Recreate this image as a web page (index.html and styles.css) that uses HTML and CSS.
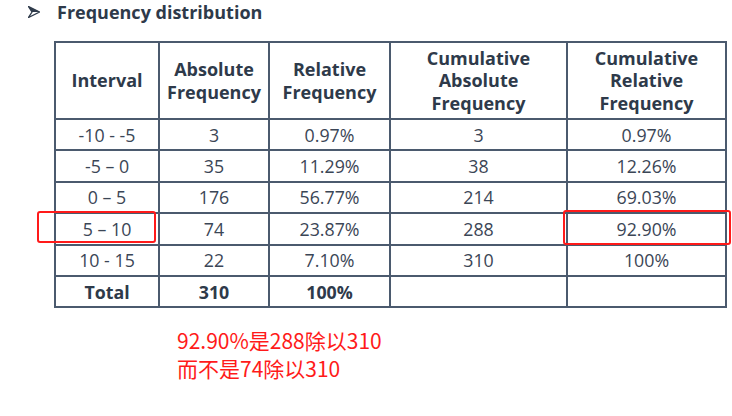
FILE: index.html
```html
<!DOCTYPE html>
<html>
<head>
<meta charset="utf-8">
<link rel="stylesheet" href="styles.css">
</head>
<body>
<div class="page">
  <h1 class="title">
    <svg class="bullet" width="12" height="12" viewBox="0 0 12 12"><path d="M0.5 0.5 L11.5 6 L0.5 11.5 L4 6 Z" fill="none" stroke="#2e3a4a" stroke-width="1.3" stroke-linejoin="miter"/><path d="M0.5 0.5 L11.5 6 L4 6 Z" fill="#2e3a4a"/></svg>
    <span>Frequency distribution</span>
  </h1>
  <div class="table-wrap">
    <table class="freq">
      <colgroup>
        <col class="c1"><col class="c2"><col class="c3"><col class="c4"><col class="c5">
      </colgroup>
      <thead>
        <tr>
          <th>Interval</th>
          <th>Absolute<br>Frequency</th>
          <th>Relative<br>Frequency</th>
          <th>Cumulative<br>Absolute<br>Frequency</th>
          <th>Cumulative<br>Relative<br>Frequency</th>
        </tr>
      </thead>
      <tbody>
        <tr><td>-10 - -5</td><td>3</td><td>0.97%</td><td>3</td><td>0.97%</td></tr>
        <tr><td>-5 – 0</td><td>35</td><td>11.29%</td><td>38</td><td>12.26%</td></tr>
        <tr><td>0 – 5</td><td>176</td><td>56.77%</td><td>214</td><td>69.03%</td></tr>
        <tr><td>5 – 10</td><td>74</td><td>23.87%</td><td>288</td><td>92.90%</td></tr>
        <tr><td>10 - 15</td><td>22</td><td>7.10%</td><td>310</td><td>100%</td></tr>
        <tr class="total"><td>Total</td><td>310</td><td>100%</td><td></td><td></td></tr>
      </tbody>
    </table>
    <div class="mark mark-left"></div>
    <div class="mark mark-right"></div>
  </div>
  <p class="note">92.90%是288除以310<br>而不是74除以310</p>
</div>
</body>
</html>
```

FILE: styles.css
```css
html, body {
  margin: 0;
  padding: 0;
  background: #ffffff;
}
.page {
  width: 732px;
  height: 416px;
  font-family: "Open Sans", "Noto Sans", "Noto Sans CJK SC", sans-serif;
  color: #333f50;
  overflow: hidden;
}
.title {
  display: flex;
  align-items: center;
  gap: 17px;
  margin: 0;
  padding: 0 0 0 28px;
  height: 24px;
  font-size: 18px;
  font-weight: 700;
  color: #2e3a4a;
}
.bullet {
  flex: none;
}
.table-wrap {
  position: relative;
  margin-top: 17px;
  padding-left: 54px;
}
.freq {
  border-collapse: collapse;
  table-layout: fixed;
  width: 671px;
}
.c1 { width: 104px; }
.c2 { width: 110px; }
.c3 { width: 121px; }
.c4 { width: 177px; }
.c5 { width: 159px; }
.freq th, .freq td {
  border: 2px solid #4b5a6e;
  text-align: center;
  padding: 0;
  white-space: nowrap;
}
.freq th {
  height: 75px;
  font-size: 18px;
  font-weight: 700;
  line-height: 22.5px;
  color: #2e3a4a;
}
.freq td {
  height: 29.4px;
  font-size: 17.8px;
  line-height: 22px;
  color: #3b4656;
}
.freq tr.total td {
  font-weight: 700;
  color: #2e3a4a;
}
.mark {
  position: absolute;
  border: 2.5px solid #ff1a1a;
  border-radius: 3px;
  box-sizing: border-box;
}
.mark-left {
  left: 37px;
  top: 170px;
  width: 119px;
  height: 32px;
}
.mark-right {
  left: 563px;
  top: 169px;
  width: 168px;
  height: 35px;
}
.note {
  margin: 18px 0 0 177px;
  font-family: "Noto Sans CJK SC", "Open Sans", sans-serif;
  font-size: 21px;
  line-height: 28px;
  color: #ff1a1a;
}
```
